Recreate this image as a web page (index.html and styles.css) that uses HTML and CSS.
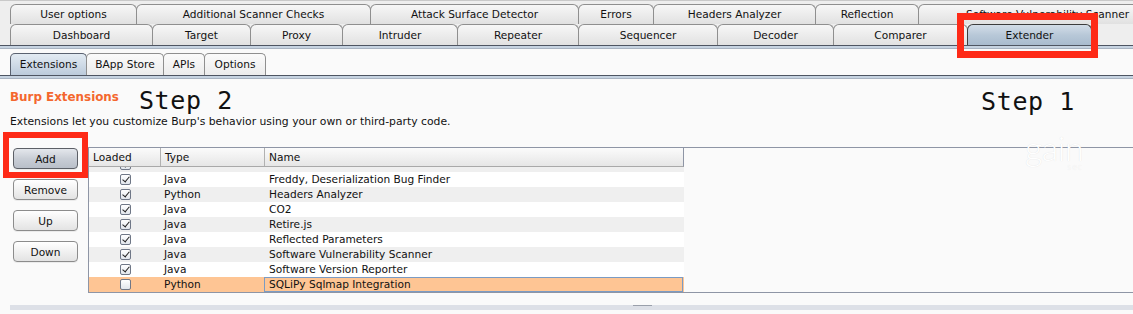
FILE: index.html
```html
<!DOCTYPE html>
<html>
<head>
<meta charset="utf-8">
<link rel="stylesheet" href="styles.css">
</head>
<body>
<div class="app">
  <div class="tabs-main">
    <div class="tab-row row1">
      <div class="tab t-useropt">User options</div>
      <div class="tab t-addscan">Additional Scanner Checks</div>
      <div class="tab t-attack">Attack Surface Detector</div>
      <div class="tab t-errors">Errors</div>
      <div class="tab t-headers">Headers Analyzer</div>
      <div class="tab t-reflection">Reflection</div>
      <div class="tab t-softvuln">Software Vulnerability Scanner</div>
    </div>
    <div class="tab-row row2">
      <div class="tab t-dashboard">Dashboard</div>
      <div class="tab t-target">Target</div>
      <div class="tab t-proxy">Proxy</div>
      <div class="tab t-intruder">Intruder</div>
      <div class="tab t-repeater">Repeater</div>
      <div class="tab t-sequencer">Sequencer</div>
      <div class="tab t-decoder">Decoder</div>
      <div class="tab t-comparer">Comparer</div>
      <div class="tab t-extender active">Extender</div>
    </div>
  </div>
  <div class="sep"></div>
  <div class="subtabs">
    <div class="subtab s-ext active">Extensions</div>
    <div class="subtab s-bapp">BApp Store</div>
    <div class="subtab s-apis">APIs</div>
    <div class="subtab s-opts">Options</div>
  </div>
  <div class="sep"></div>
  <div class="content">
    <div class="title-row">
      <span class="burp-title">Burp Extensions</span>
      <span class="step step2">Step 2</span>
      <span class="step step1">Step 1</span>
    </div>
    <p class="desc">Extensions let you customize Burp's behavior using your own or third-party code.</p>
    <div class="main">
      <div class="buttons">
        <button class="btn btn-add">Add</button>
        <button class="btn">Remove</button>
        <button class="btn">Up</button>
        <button class="btn">Down</button>
      </div>
      <div class="pane">
        <div class="table">
          <div class="thead">
            <div class="cell c-loaded">Loaded</div>
            <div class="cell c-type">Type</div>
            <div class="cell c-name">Name</div>
          </div>
          <div class="tbody">
            <div class="row even partial"><div class="cell c-loaded"><span class="cb on"></span></div><div class="cell c-type"></div><div class="cell c-name"></div></div>
            <div class="row odd"><div class="cell c-loaded"><span class="cb on"></span></div><div class="cell c-type">Java</div><div class="cell c-name">Freddy, Deserialization Bug Finder</div></div>
            <div class="row even"><div class="cell c-loaded"><span class="cb on"></span></div><div class="cell c-type">Python</div><div class="cell c-name">Headers Analyzer</div></div>
            <div class="row odd"><div class="cell c-loaded"><span class="cb on"></span></div><div class="cell c-type">Java</div><div class="cell c-name">CO2</div></div>
            <div class="row even"><div class="cell c-loaded"><span class="cb on"></span></div><div class="cell c-type">Java</div><div class="cell c-name">Retire.js</div></div>
            <div class="row odd"><div class="cell c-loaded"><span class="cb on"></span></div><div class="cell c-type">Java</div><div class="cell c-name">Reflected Parameters</div></div>
            <div class="row even"><div class="cell c-loaded"><span class="cb on"></span></div><div class="cell c-type">Java</div><div class="cell c-name">Software Vulnerability Scanner</div></div>
            <div class="row odd"><div class="cell c-loaded"><span class="cb on"></span></div><div class="cell c-type">Java</div><div class="cell c-name">Software Version Reporter</div></div>
            <div class="row selected"><div class="cell c-loaded"><span class="cb"></span></div><div class="cell c-type">Python</div><div class="cell c-name focus">SQLiPy Sqlmap Integration</div></div>
          </div>
        </div>
      </div>
    </div>
    <div class="divider"><span class="grip"></span></div>
  </div>
  <div class="highlight hl-extender"></div>
  <div class="highlight hl-add"></div>
  <div class="watermark"><span class="wm-gain">gain</span><span class="wm-sec">sec</span></div>
</div>
</body>
</html>
```

FILE: styles.css
```css
* { box-sizing: border-box; }
html, body { margin: 0; padding: 0; }
body {
  width: 1133px;
  height: 314px;
  overflow: hidden;
  background: #fafafa;
  font-family: "DejaVu Sans", "Liberation Sans", sans-serif;
  color: #111;
}
.app { position: relative; width: 1133px; height: 314px; overflow: hidden; }

/* main tabs */
.tabs-main {
  background: #eeeeee;
  border-top: 1px solid #c9c9c9;
  padding: 3px 0 0 10px;
  height: 45px;
}
.tab-row { display: flex; white-space: nowrap; }
.row1 { height: 20px; }
.row2 { height: 21px; }
.tab {
  flex: none;
  margin-right: -1px;
  border: 1px solid #8f8f8f;
  border-bottom: none;
  border-radius: 6px 6px 0 0;
  background: linear-gradient(#f7f7f7, #e1e1e1);
  font-size: 10.6px;
  text-align: center;
  line-height: 19px;
  color: #111;
}
.row2 .tab { line-height: 20px; }
.tab.active {
  background: linear-gradient(#d3dde8, #b8c8d8 50%, #a9bbce);
  border-color: #3d3d3d;
}
.t-useropt { width: 127px; }
.t-addscan { width: 235px; }
.t-attack { width: 209px; }
.t-errors { width: 76px; }
.t-headers { width: 163px; }
.t-reflection { width: 104px; }
.t-softvuln { width: 259px; }
.t-dashboard { width: 143px; }
.t-target { width: 99px; }
.t-proxy { width: 93px; }
.t-intruder { width: 116px; }
.t-repeater { width: 122px; }
.t-sequencer { width: 140px; }
.t-decoder { width: 117px; }
.t-comparer { width: 135px; }
.t-extender { width: 125px; }

.sep {
  height: 4px;
  border-top: 1px solid #4e5562;
  background: #c6d3e1;
  border-bottom: 1px solid #a8b3c1;
}

/* sub tabs */
.subtabs {
  display: flex;
  padding: 4px 0 0 10px;
  height: 26px;
  background: #fafafa;
}
.subtab {
  flex: none;
  margin-right: -1px;
  height: 22px;
  border: 1px solid #8f8f8f;
  border-bottom: none;
  border-radius: 5px 5px 0 0;
  background: linear-gradient(#fbfbfb, #ececec);
  font-size: 10.6px;
  line-height: 21px;
  text-align: center;
}
.subtab.active {
  background: linear-gradient(#e3ebf3, #bccbdb);
  border-color: #5a6270;
}
.s-ext { width: 77px; }
.s-bapp { width: 78px; }
.s-apis { width: 42px; }
.s-opts { width: 62px; }

/* content */
.content { padding: 0; }
.title-row {
  display: flex;
  align-items: flex-start;
  padding: 8px 58px 0 10px;
  height: 36px;
}
.burp-title {
  margin-top: 3px;
  font-size: 11.9px;
  line-height: 15px;
  font-weight: bold;
  color: #f4672e;
}
.step {
  font-family: "DejaVu Sans Mono", "Liberation Mono", monospace;
  font-size: 25px;
  line-height: 28px;
  letter-spacing: 0.6px;
  color: #111;
}
.step2 { margin-left: 20px; }
.step1 { margin-left: auto; margin-top: 1px; }
.desc {
  margin: 0;
  padding-left: 10px;
  font-size: 10.8px;
  line-height: 14px;
  color: #111;
}
.main {
  display: flex;
  margin-top: 18px;
  height: 146px;
}
.buttons {
  flex: none;
  width: 88px;
  display: flex;
  flex-direction: column;
  gap: 10px;
  padding: 1px 0 0 13px;
}
.btn {
  width: 65px;
  height: 21px;
  margin: 0;
  padding: 0;
  border: 1px solid #8c8c8c;
  border-radius: 4px;
  background: linear-gradient(#ffffff, #f1f1f1 50%, #e3e3e3);
  font-family: "DejaVu Sans", "Liberation Sans", sans-serif;
  font-size: 10.6px;
  color: #111;
  box-shadow: 0 1px 0 rgba(0,0,0,0.06);
}
.btn-add {
  background: linear-gradient(#e4e7ec, #c9ced6 50%, #b9bfc9);
  border-color: #5c5f66;
}
.pane {
  flex: 1;
  border-top: 1px solid #8e95a5;
  border-bottom: 1px solid #8e95a5;
  border-left: 1px solid #8e95a5;
  background: #fafafa;
}
.table { width: 595px; }
.thead {
  display: flex;
  height: 19px;
  background: linear-gradient(#fbfbfb, #e6e6e6);
  border-bottom: 1px solid #a9a9a9;
  border-right: 1px solid #8e95a5;
}
.thead .cell {
  font-size: 10.6px;
  line-height: 18px;
  padding-left: 4px;
}
.thead .c-type, .thead .c-name { border-left: 1px solid #b1b1b1; }
.cell { flex: none; white-space: nowrap; overflow: hidden; }
.c-loaded { width: 71px; }
.c-type { width: 104px; }
.c-name { width: 419px; }
.tbody {
  height: 125px;
  display: flex;
  flex-direction: column;
  justify-content: flex-end;
  overflow: hidden;
}
.row {
  flex: none;
  display: flex;
  height: 15px;
  font-size: 10.6px;
  line-height: 15px;
}
.row.odd { background: #ffffff; }
.row.even { background: #efefef; }
.row.selected { background: #fec594; }
.row .c-loaded { text-align: center; padding-left: 1px; }
.row .c-type { padding-left: 4px; }
.row .c-name { padding-left: 5px; }
.row .focus { border: 1px solid #7b9bc3; line-height: 13px; padding-left: 4px; }
.cb {
  display: inline-block;
  vertical-align: middle;
  width: 11px;
  height: 11px;
  margin-top: -2px;
  border: 1px solid #6f7787;
  border-radius: 2px;
  background: linear-gradient(#ffffff, #e2e6ec);
  position: relative;
}
.cb.on::after {
  content: "";
  position: absolute;
  left: 3px;
  top: 0px;
  width: 3px;
  height: 6px;
  border-right: 1.5px solid #222;
  border-bottom: 1.5px solid #222;
  transform: rotate(40deg);
}
.divider {
  position: relative;
  margin: 12px 0 0 10px;
  height: 5px;
  background: #dde0e7;
}
.grip {
  position: absolute;
  left: 623px;
  top: 0;
  width: 19px;
  height: 1px;
  background: #9aa0ab;
}

/* overlays */
.highlight {
  position: absolute;
  border: 6px solid #fe2a17;
}
.hl-extender { left: 957px; top: 13px; width: 141px; height: 45px; border-width: 7px; }
.hl-add { left: 3px; top: 132px; width: 85px; height: 46px; }
.watermark {
  position: absolute;
  left: 1025px;
  top: 134px;
  display: flex;
  flex-direction: column;
  align-items: flex-end;
  font-family: Lato, "Open Sans", sans-serif;
  font-weight: 300;
  color: #ffffff;
  text-shadow: 0 0 1px rgba(0,0,0,0.12);
}
.wm-gain {
  font-size: 34px;
  line-height: 28px;
  letter-spacing: -0.5px;
}
.wm-sec {
  font-size: 9px;
  line-height: 9px;
  letter-spacing: 1px;
}
```
